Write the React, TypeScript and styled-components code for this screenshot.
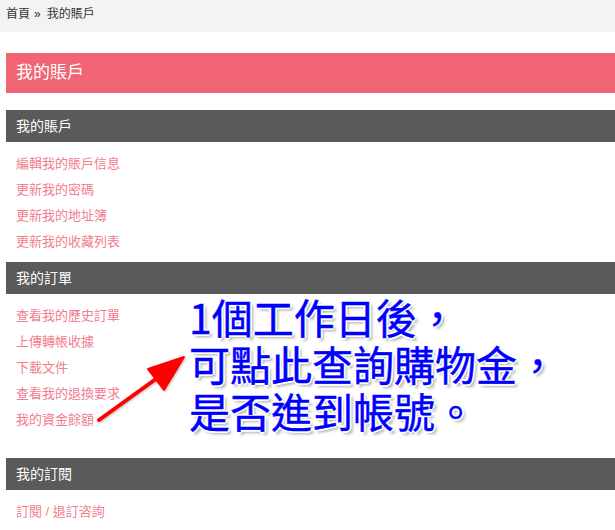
import React from "react";
import styled, { createGlobalStyle } from "styled-components";

const Global = createGlobalStyle`
  html, body { margin: 0; padding: 0; background: #fff; }
  body { font-family: "Liberation Sans", "Noto Sans CJK TC", sans-serif; }
`;

const Page = styled.div`
  position: relative;
  width: 615px;
  height: 530px;
  overflow: hidden;
  font-family: "Liberation Sans", "Noto Sans CJK TC", sans-serif;
`;

const Breadcrumb = styled.div`
  height: 32px;
  box-sizing: border-box;
  background: #f3f3f3;
  padding: 6px 6px 0;
  font-size: 12px;
  line-height: 16px;
  color: #333;
`;

const Sep = styled.span`
  margin: 0 6px 0 4px;
`;

const Main = styled.div`
  padding: 21px 0 0 6px;
`;

const Title = styled.h1`
  margin: 0 0 17px;
  height: 40px;
  background: #f16474;
  color: #fff;
  font-size: 17px;
  font-weight: normal;
  line-height: 40px;
  padding-left: 10px;
`;

const SectionHead = styled.h2`
  margin: 0;
  height: 32px;
  background: #5a5a5a;
  color: #fff;
  font-size: 14px;
  font-weight: normal;
  line-height: 32px;
  padding-left: 10px;
`;

const LinkList = styled.ul<{ $bottom: number }>`
  list-style: none;
  margin: 0;
  padding: 9px 0 ${(p) => p.$bottom - 1}px 10px;
`;

const LinkItem = styled.li`
  font-size: 13px;
  line-height: 26px;
  color: #f27d8e;
`;

const Note = styled.div`
  position: absolute;
  left: 189px;
  top: 293px;
  color: #0000ff;
  font-family: "Noto Sans CJK TC", sans-serif;
  font-weight: normal;
  font-size: 41px;
  line-height: 47px;
  white-space: nowrap;
  -webkit-text-stroke: 0.45px #0000ff;
  text-shadow: -1px -1px 0 #fff, 1px -1px 0 #fff, -1px 1px 0 #fff, 1px 1px 0 #fff,
    0 -2px 0 #fff, 0 2px 0 #fff, -2px 0 0 #fff, 2px 0 0 #fff, 3px 3px 3px rgba(0, 0, 0, 0.35);
`;

const Arrow = styled.svg`
  position: absolute;
  left: 0;
  top: 0;
  pointer-events: none;
`;

const sections = [
  { head: "我的賬戶", links: ["編輯我的賬戶信息", "更新我的密碼", "更新我的地址簿", "更新我的收藏列表"], bottom: 8 },
  { head: "我的訂單", links: ["查看我的歷史訂單", "上傳轉帳收據", "下載文件", "查看我的退換要求", "我的資金餘額"], bottom: 26 },
  { head: "我的訂閱", links: ["訂閱 / 退訂咨詢"], bottom: 8 },
];

export default function App() {
  return (
    <Page>
      <Global />
      <Breadcrumb>
        首頁<Sep>»</Sep>我的賬戶
      </Breadcrumb>
      <Main>
        <Title>我的賬戶</Title>
        {sections.map((s) => (
          <section key={s.head}>
            <SectionHead>{s.head}</SectionHead>
            <LinkList $bottom={s.bottom}>
              {s.links.map((l) => (
                <LinkItem key={l}>{l}</LinkItem>
              ))}
            </LinkList>
          </section>
        ))}
      </Main>
      <Arrow width="615" height="530" viewBox="0 0 615 530">
        <defs>
          <filter id="sh" x="-20%" y="-20%" width="140%" height="140%">
            <feDropShadow dx="1" dy="1" stdDeviation="1" floodColor="#000" floodOpacity="0.25" />
          </filter>
        </defs>
        <g filter="url(#sh)">
          <line x1="99" y1="420" x2="160" y2="376" stroke="#ff0000" strokeWidth="4" strokeLinecap="round" />
          <polygon points="184,357 148,369 164,390" fill="#ff0000" stroke="#ff0000" strokeWidth="2" strokeLinejoin="round" />
        </g>
      </Arrow>
      <Note>
        1個工作日後，
        <br />
        可點此查詢購物金，
        <br />
        是否進到帳號。
      </Note>
    </Page>
  );
}
